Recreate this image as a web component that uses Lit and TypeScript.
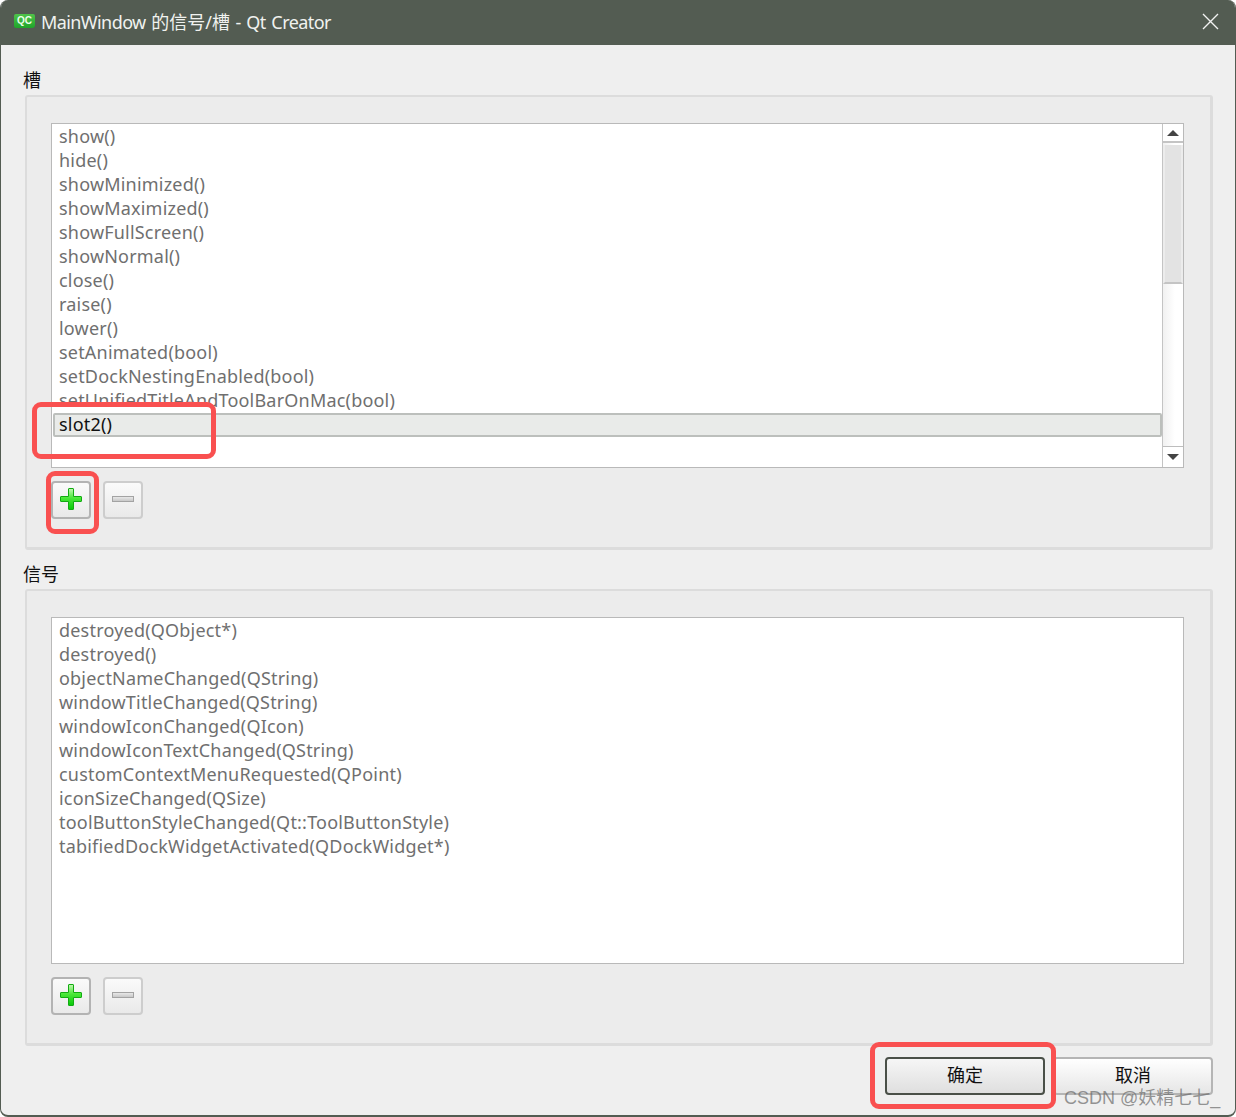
import { LitElement, html, css, svg } from "lit";
import { customElement } from "lit/decorators.js";

const slots = ["show()","hide()","showMinimized()","showMaximized()","showFullScreen()","showNormal()","close()","raise()","lower()","setAnimated(bool)","setDockNestingEnabled(bool)","setUnifiedTitleAndToolBarOnMac(bool)"];
const signals = ["destroyed(QObject*)","destroyed()","objectNameChanged(QString)","windowTitleChanged(QString)","windowIconChanged(QIcon)","windowIconTextChanged(QString)","customContextMenuRequested(QPoint)","iconSizeChanged(QSize)","toolButtonStyleChanged(Qt::ToolButtonStyle)","tabifiedDockWidgetActivated(QDockWidget*)"];

const defs = svg`<defs>
  <linearGradient id="gp" x1="0" y1="0" x2="0" y2="1"><stop offset="0" stop-color="#c4f8b4"/><stop offset=".45" stop-color="#4ae838"/><stop offset="1" stop-color="#08c808"/></linearGradient>
  <linearGradient id="gm" x1="0" y1="0" x2="0" y2="1"><stop offset="0" stop-color="#ececec"/><stop offset="1" stop-color="#c4c4c4"/></linearGradient>
</defs>`;
const plus = html`<svg width="24" height="24" viewBox="0 1 24 24">${defs}<path d="M10 1.5h4a.5.5 0 0 1 .5.5v7.5H22a.5.5 0 0 1 .5.5v4a.5.5 0 0 1-.5.5h-7.5V22a.5.5 0 0 1-.5.5h-4a.5.5 0 0 1-.5-.5v-7.5H2a.5.5 0 0 1-.5-.5v-4a.5.5 0 0 1 .5-.5h7.5V2a.5.5 0 0 1 .5-.5z" fill="url(#gp)" stroke="#12ab12" stroke-width="1"/></svg>`;
const minus = html`<svg width="24" height="8" viewBox="0 1 24 8">${defs}<rect x="1.5" y="1.5" width="21" height="5" fill="url(#gm)" stroke="#a3a3a3"/></svg>`;

@customElement("app-root")
export class AppRoot extends LitElement {
  static styles = css`
    :host { display:block; height:1117px; background:#fff; font-family:"Noto Sans","Noto Sans CJK SC",sans-serif; position:relative; overflow:hidden; }
    .win { box-sizing:border-box; height:1117px; display:flex; flex-direction:column; background:#efefef; border:solid #535c52; border-width:0 1px 2px 1px; border-radius:8px; overflow:hidden; }
    .title { box-sizing:border-box; flex:none; height:45px; margin:0 -1px; background:#535c52; color:#f0f2ef; display:flex; align-items:center; padding:0 16px 3px 14px; font-size:18px; }
    .qc { width:21px; height:14px; background:linear-gradient(#4fc34a,#1fa52a); border-radius:2px 2px 3px 2px; color:#eaffea; font:700 10px/14px "Liberation Sans",sans-serif; text-align:center; margin-right:6px; }
    .name { flex:1; letter-spacing:-.58px; word-spacing:1.5px; }
    .cjk { letter-spacing:0; }
    .content { flex:1; display:flex; flex-direction:column; padding:23px 22px 0 22px; }
    .label { height:27px; line-height:24px; font-size:18px; color:#111; }
    .group { box-sizing:border-box; margin-left:2px; background:#ececec; border:solid #dcdcdc; border-width:2px 3px 3px 2px; border-radius:3px; padding:26px 26px 0 24px; }
    .g1 { height:455px; margin-bottom:12px; }
    .g2 { height:457px; }
    .list { box-sizing:border-box; height:345px; background:#fff; border:1px solid #b9b9b9; display:flex; overflow:hidden; position:relative; }
    .g2 .list { height:347px; }
    .rows { flex:1; min-width:0; display:flex; flex-direction:column; }
    .row { flex:none; height:24px; line-height:24px; padding-left:7px; font-size:18px; color:#6f6f6f; letter-spacing:.2px; white-space:nowrap; }
    .sel { box-sizing:border-box; margin:1px 0 0 1px; height:24px; line-height:18px; padding-left:4px; background:#e9ebe9; border:2px solid #bcbfbc; border-radius:2px; color:#111; }
    .bar { flex:none; width:20px; border-left:1px solid #c4c4c4; display:flex; flex-direction:column; background:linear-gradient(90deg,#f1f1f1,#fff 60%); }
    .arr { flex:none; height:17px; background:#fff; display:flex; align-items:center; justify-content:center; border-bottom:2px solid #c4c4c4; }
    .arr.down { height:20px; border-bottom:none; border-top:1px solid #bdbdbd; margin-top:auto; }
    .up,.dn { width:0; height:0; border-left:6px solid transparent; border-right:6px solid transparent; }
    .up { border-bottom:6px solid #444; }
    .dn { border-top:6px solid #444; }
    .thumb { flex:none; height:139px; margin:2px 0 0 0; box-sizing:border-box; background:#e3e3e3; border-left:2px solid #ececec; border-right:2px solid #ececec; border-bottom:2px solid #c4c4c4; }
    .btns { display:flex; gap:12px; margin-top:13px; }
    .tb { box-sizing:border-box; width:40px; height:38px; display:flex; align-items:center; justify-content:center; border:2px solid #b3b3b3; border-radius:4px; background:linear-gradient(#fafafa,#e9e9e9); }
    .tb.off { border-color:#cdcdcd; }
    .foot { flex:1; display:flex; justify-content:flex-end; gap:8px; padding-top:11px; }
    .b { box-sizing:border-box; width:160px; height:38px; border:2px solid #b5b5b5; border-radius:4px; background:linear-gradient(#fff,#e6e6e6); text-align:center; line-height:33px; font-size:18px; color:#111; }
    .b.def { border-color:#4a5048; background:linear-gradient(#f6f6f6,#dfdfdf); }
    .mark { position:absolute; box-sizing:border-box; border:5px solid #f95050; border-radius:9px; pointer-events:none; }
    .wm { position:absolute; left:1064px; top:1086px; font-size:18px; line-height:24px; color:rgba(110,110,110,.72); white-space:nowrap; font-family:"Liberation Sans","Noto Sans CJK SC",sans-serif; }
    .close { display:block; }
  `;
  private controls() {
    return html`<div class="btns"><div class="tb">${plus}</div><div class="tb off">${minus}</div></div>`;
  }
  render() {
    return html`<div class="win">
      <div class="title"><div class="qc">QC</div><div class="name">MainWindow <span class="cjk">的信号/槽</span> - Qt Creator</div>
        <svg class="close" width="20" height="20" viewBox="0 0 20 20"><path d="M3 3l15 15M18 3L3 18" stroke="#f2f2f2" stroke-width="1.4" fill="none"/></svg></div>
      <div class="content">
        <div class="label">槽</div>
        <div class="group g1">
          <div class="list">
            <div class="rows">${slots.map(s=>html`<div class="row">${s}</div>`)}<div class="row sel">slot2()</div></div>
            <div class="bar"><div class="arr"><div class="up"></div></div><div class="thumb"></div><div class="arr down"><div class="dn"></div></div></div>
          </div>
          ${this.controls()}
        </div>
        <div class="label">信号</div>
        <div class="group g2">
          <div class="list"><div class="rows">${signals.map(s=>html`<div class="row">${s}</div>`)}</div></div>
          ${this.controls()}
        </div>
        <div class="foot"><div class="b def">确定</div><div class="b">取消</div></div>
      </div>
    </div>
    <div class="mark" style="left:32px;top:402px;width:184px;height:57px"></div>
    <div class="mark" style="left:46px;top:471px;width:53px;height:63px"></div>
    <div class="mark" style="left:870px;top:1042px;width:186px;height:67px"></div>
    <div class="wm">CSDN @妖精七七_</div>`;
  }
}
